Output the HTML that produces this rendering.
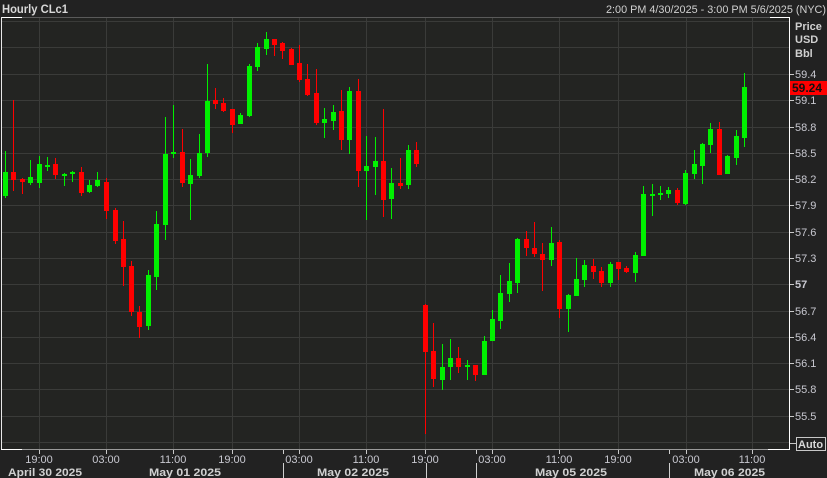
<!DOCTYPE html>
<html><head><meta charset="utf-8"><style>
html,body{margin:0;padding:0;background:#222222;}
svg{display:block;font-family:"Liberation Sans",sans-serif;}
</style></head><body>
<svg id="s" width="827" height="478" viewBox="0 0 827 478" xmlns="http://www.w3.org/2000/svg">
<rect width="827" height="478" fill="#222222"/>
<rect x="1" y="17" width="788" height="432" fill="#232422"/>
<g id="grid" stroke="#3a3b39" stroke-width="1"></g>
<g id="c"></g>
<line x1="1" y1="17.5" x2="789" y2="17.5" stroke="#5a5a5a"/>
<line x1="1" y1="17.5" x2="22" y2="17.5" stroke="#ffffff"/>
<line x1="770" y1="17.5" x2="789" y2="17.5" stroke="#ffffff"/>
<line x1="1.5" y1="17" x2="1.5" y2="450" stroke="#e8e8e8"/>
<line x1="789.5" y1="17" x2="789.5" y2="450" stroke="#ffffff"/>
<line x1="1" y1="449.5" x2="790" y2="449.5" stroke="#9a9a9a"/>
<line x1="1" y1="449.5" x2="22" y2="449.5" stroke="#ffffff"/>
<line x1="768" y1="449.5" x2="790" y2="449.5" stroke="#ffffff"/>
<text x="2" y="13" font-size="12" font-weight="bold" fill="#d8d8d8" textLength="66" lengthAdjust="spacingAndGlyphs">Hourly CLc1</text>
<text x="606" y="13" font-size="11" fill="#d0d0d0" textLength="220" lengthAdjust="spacingAndGlyphs">2:00 PM 4/30/2025 - 3:00 PM 5/6/2025 (NYC)</text>
<g font-size="11" font-weight="bold" fill="#d0d0d0">
<text x="795" y="30">Price</text><text x="795" y="43">USD</text><text x="795" y="57">Bbl</text>
</g>
<g id="ax" font-size="11" fill="#c8c8d0"></g>
<rect x="790" y="81" width="37" height="14" fill="#ff0000"/>
<text x="792" y="92" font-size="12" font-weight="bold" fill="#111">59.24</text>
<rect x="796.5" y="437.5" width="29" height="13" fill="none" stroke="#c8c8c8"/>
<text x="798" y="448" font-size="11" font-weight="bold" fill="#d8d8d8">Auto</text>
<line x1="790" y1="443.5" x2="796" y2="443.5" stroke="#c8c8c8"/>
<g id="bx" font-size="11" fill="#c8c8d0"></g>
<g font-size="11" font-weight="bold" fill="#d0d0d0">
<text x="8" y="476" textLength="74" lengthAdjust="spacingAndGlyphs">April 30 2025</text>
<text x="149" y="476" textLength="72" lengthAdjust="spacingAndGlyphs">May 01 2025</text>
<text x="317" y="476" textLength="72" lengthAdjust="spacingAndGlyphs">May 02 2025</text>
<text x="535" y="476" textLength="72" lengthAdjust="spacingAndGlyphs">May 05 2025</text>
<text x="694" y="476" textLength="71" lengthAdjust="spacingAndGlyphs">May 06 2025</text>
</g>
<g stroke="#cfcfcf">
<line x1="283.5" y1="450" x2="283.5" y2="454"/>
<line x1="476.5" y1="450" x2="476.5" y2="454"/>
<line x1="669.5" y1="450" x2="669.5" y2="454"/>
<line x1="283.5" y1="463" x2="283.5" y2="478"/>
<line x1="426.5" y1="463" x2="426.5" y2="478"/>
<line x1="476.5" y1="463" x2="476.5" y2="478"/>
<line x1="669.5" y1="463" x2="669.5" y2="478"/>
</g>
</svg>
<script>
var NS="http://www.w3.org/2000/svg";
function el(p,t,a,txt){var e=document.createElementNS(NS,t);for(var k in a)e.setAttribute(k,a[k]);if(txt)e.textContent=txt;p.appendChild(e);return e;}
var g=document.getElementById('grid');
var hy=[21,47,74,100,127,153,179,205,232,258,284,311,337,363,389,416,442];
hy.forEach(function(y){el(g,'line',{x1:2,x2:789,y1:y+.5,y2:y+.5});});
var vx=[39,106,173,232,299,366,425,492,559,618,686,752];
vx.forEach(function(x){el(g,'line',{x1:x+.5,x2:x+.5,y1:18,y2:449});});
var ax=document.getElementById('ax');
var lab=[["59.4",74],["59.1",100],["58.8",127],["58.5",153],["58.2",179],["57.9",205],["57.6",232],["57.3",258],["57",284],["56.7",311],["56.4",337],["56.1",363],["55.8",389],["55.5",416]];
lab.forEach(function(l){var t=el(ax,'text',{x:795,y:l[1]+4},l[0]);if(l[0]=="57")t.setAttribute('font-weight','bold');
el(ax,'line',{x1:790,x2:794,y1:l[1]+.5,y2:l[1]+.5,stroke:'#c8c8c8'});});
var bx=document.getElementById('bx');
var tl=["19:00","03:00","11:00","19:00","03:00","11:00","19:00","03:00","11:00","19:00","03:00","11:00"];
vx.forEach(function(x,i){el(bx,'text',{x:x,y:463,'text-anchor':'middle'},tl[i]);el(bx,'line',{x1:x+.5,x2:x+.5,y1:450,y2:454,stroke:'#c8c8c8'});});
var C=[
[5.3,151,198,172,196,'g'],[13.3,100,191,172,180,'r'],[22,178,194,179,182,'r'],[30.3,160,185,177,183,'g'],[39,156,188,164,183,'g'],[47.3,157,171,165,166,'g'],[55.3,158,179,164,175,'r'],[64.3,173,186,174,176,'g'],[72.3,171,182,172,173,'g'],[81.3,167,196,172,193,'r'],[89.3,180,193,185,192,'g'],[97.3,172,187,180,186,'g'],[106.3,178,219,182,211,'r'],[114.7,208,244,210,241,'r'],[123.3,221,286,239,267,'r'],[131.3,261,316,266,312,'r'],[139.3,306,338,312,327,'r'],[148.3,270,330,275,326,'g'],[156.3,211,290,224,277,'g'],[165.3,117,240,154,225,'g'],[173.3,105,158,152,154,'g'],[181.7,129,187,152,183,'r'],[190.3,159,220,175,184,'g'],[198.7,134,178,153,176,'g'],[207.3,64,157,101,153,'g'],[215.3,88,109,100,104,'r'],[223.3,98,112,103,111,'r'],[232.3,109,133,109,125,'r'],[240.3,113,124,115,124,'g'],[249,64,117,66,116,'g'],[257.3,43,71,47,67,'g'],[265.5,32,55,39,49,'g'],
[274.3,39,56,39,45,'r'],[282.3,42,59,43,51,'r'],[291.3,48,65,49,65,'r'],[299.3,45,82,63,80,'r'],[307.3,64,96,79,95,'r'],[316.3,69,125,93,123,'r'],[324.3,108,138,119,123,'g'],[333.3,105,130,112,121,'g'],[341.3,90,150,111,140,'r'],[349.3,87,154,91,140,'g'],[358.3,79,187,91,171,'r'],[366.3,136,220,166,171,'g'],[375.3,137,195,161,167,'g'],[383.3,109,217,161,200,'r'],[391.3,168,219,183,199,'g'],[400.3,158,189,183,186,'r'],[408.3,145,189,150,185,'g'],[416.3,142,167,150,164,'r'],
[425.3,304,434,305,352,'r'],[433.3,323,387,351,379,'r'],[442.3,344,390,367,380,'g'],[450.3,339,380,358,367,'g'],[458.3,347,373,358,367,'r'],[467.3,360,380,365,367,'g'],[475.3,365,381,365,375,'r'],[484.3,336,375,341,375,'g'],[492.3,310,341,319,341,'g'],[500.3,275,329,293,321,'g'],[509.3,263,302,281,294,'g'],[517.3,238,293,239,283,'g'],[526.3,231,256,239,248,'r'],
[534.3,222,257,248,254,'r'],[542.3,243,291,254,260,'r'],[551.3,227,266,243,260,'g'],[559.3,240,318,242,309,'r'],[568.3,294,332,295,309,'g'],[576.3,258,296,279,296,'g'],[584.3,260,287,265,280,'g'],[593.3,259,279,266,272,'r'],[601.3,267,287,271,283,'r'],[610.3,262,287,264,283,'g'],[618.3,262,280,262,269,'r'],[626.3,266,273,268,272,'r'],[635.3,252,282,255,273,'g'],[643.3,186,256,194,256,'g'],[652.3,184,216,194,196,'g'],[660.3,186,200,193,195,'g'],[668.3,187,198,190,194,'g'],[677.3,188,205,190,203,'r'],[685.3,170,205,173,204,'g'],[694.3,150,179,164,174,'g'],[702.3,143,184,144,166,'g'],[710.3,123,153,129,145,'g'],[719.3,122,175,129,175,'r'],[727.3,155,174,156,174,'g'],[736.3,130,165,136,158,'g'],[744.3,73,147,87,138,'g']];
var cg=document.getElementById('c');
C.forEach(function(c){var col=c[5]=='g'?'#00f000':'#ff0000';var x=Math.round(c[0]);
el(cg,'rect',{x:x,y:c[1],width:1,height:c[2]-c[1],fill:col});
el(cg,'rect',{x:x-2,y:c[3],width:5,height:Math.max(2,c[4]-c[3]),fill:col});});
</script>
</body></html>
